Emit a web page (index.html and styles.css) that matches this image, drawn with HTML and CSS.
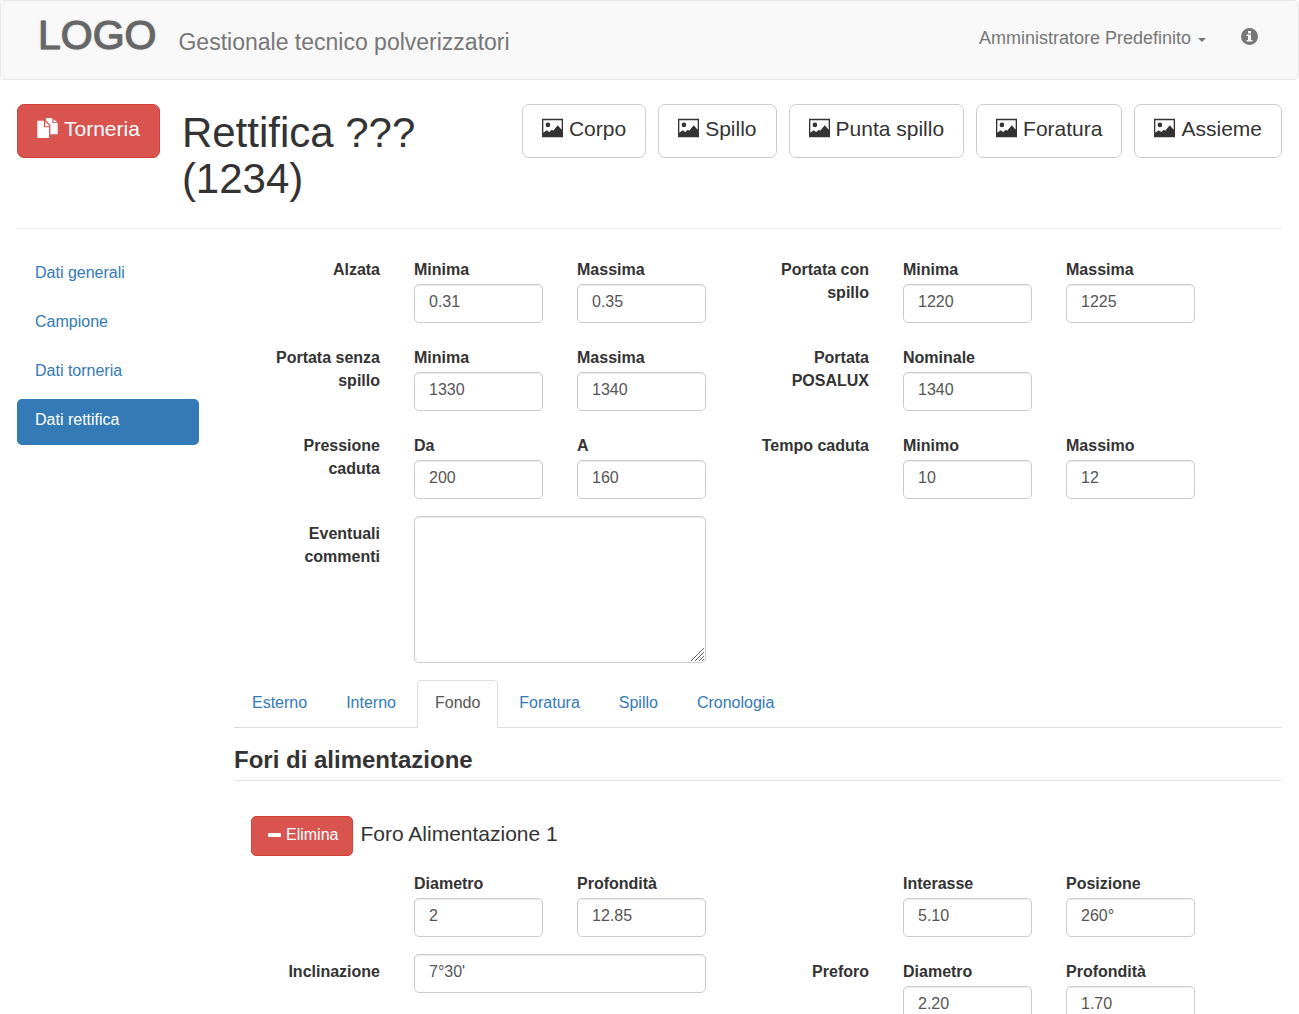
FILE: index.html
```html
<!DOCTYPE html>
<html lang="it">
<head>
<meta charset="utf-8">
<meta name="viewport" content="width=device-width, initial-scale=1">
<title>Gestionale tecnico polverizzatori</title>
<link rel="stylesheet" href="styles.css">
</head>
<body>
<svg class="sprite" aria-hidden="true">
  <symbol id="picture" viewBox="0 0 64 57">
    <path fill-rule="evenodd" d="M0 0H64V57H0zM4 5V43L14 35L22 41L30 34L34 37L48 20L60 34V5z"/>
    <circle cx="18" cy="19" r="7"/>
  </symbol>
  <symbol id="files" viewBox="0 0 64 63">
    <path d="M0 9H21V29H37V63H0zM25 11L37 24V26H25zM27 0H47V16H64V51H41V22L27 7zM51 3L63 13H51z"/>
  </symbol>
  <symbol id="minus" viewBox="0 0 16 16">
    <rect x="2" y="6" width="13" height="4" rx="1"/>
  </symbol>
  <symbol id="info" viewBox="0 0 17 17">
    <path fill-rule="evenodd" d="M8.500 0A8.500 8.500 0 1 1 8.500 17A8.500 8.500 0 1 1 8.500 0zM7 3V5.500H10V3zM5.500 6.500V8H7V12H5.500V13.500H11.500V12H10V6.500z"/>
  </symbol>
</svg>

<nav class="navbar">
  <a class="brand" href="#">
    <span class="logo">LOGO</span>
    <span class="brand-name">Gestionale tecnico polverizzatori</span>
  </a>
  <div class="nav-right">
    <button class="user-menu" type="button" aria-haspopup="true">Amministratore Predefinito <span class="caret"></span></button>
    <a class="info-link" href="#" aria-label="Informazioni"><svg class="icon-info"><use href="#info"/></svg></a>
  </div>
</nav>

<div class="container">
  <header class="page-header">
    <button class="btn btn-lg btn-danger" type="button"><svg class="icon-lg"><use href="#files"/></svg>Torneria</button>
    <h1>Rettifica ??? (1234)</h1>
    <div class="drawings">
      <button class="btn btn-lg" type="button"><svg class="icon-lg"><use href="#picture"/></svg>Corpo</button>
      <button class="btn btn-lg" type="button"><svg class="icon-lg"><use href="#picture"/></svg>Spillo</button>
      <button class="btn btn-lg" type="button"><svg class="icon-lg"><use href="#picture"/></svg>Punta spillo</button>
      <button class="btn btn-lg" type="button"><svg class="icon-lg"><use href="#picture"/></svg>Foratura</button>
      <button class="btn btn-lg" type="button"><svg class="icon-lg"><use href="#picture"/></svg>Assieme</button>
    </div>
  </header>

  <div class="columns">
    <nav class="side-nav">
      <a href="#">Dati generali</a>
      <a href="#">Campione</a>
      <a href="#">Dati torneria</a>
      <a class="active" href="#">Dati rettifica</a>
    </nav>

    <main>
      <form>
        <div class="form-row">
          <span class="row-label">Alzata</span>
          <div class="field"><label for="alzata-min">Minima</label><input id="alzata-min" type="text" value="0.31"></div>
          <div class="field"><label for="alzata-max">Massima</label><input id="alzata-max" type="text" value="0.35"></div>
          <span class="row-label">Portata con spillo</span>
          <div class="field"><label for="con-min">Minima</label><input id="con-min" type="text" value="1220"></div>
          <div class="field"><label for="con-max">Massima</label><input id="con-max" type="text" value="1225"></div>
        </div>
        <div class="form-row">
          <span class="row-label">Portata senza spillo</span>
          <div class="field"><label for="senza-min">Minima</label><input id="senza-min" type="text" value="1330"></div>
          <div class="field"><label for="senza-max">Massima</label><input id="senza-max" type="text" value="1340"></div>
          <span class="row-label">Portata POSALUX</span>
          <div class="field"><label for="posalux">Nominale</label><input id="posalux" type="text" value="1340"></div>
        </div>
        <div class="form-row">
          <span class="row-label">Pressione caduta</span>
          <div class="field"><label for="pressione-da">Da</label><input id="pressione-da" type="text" value="200"></div>
          <div class="field"><label for="pressione-a">A</label><input id="pressione-a" type="text" value="160"></div>
          <span class="row-label">Tempo caduta</span>
          <div class="field"><label for="tempo-min">Minimo</label><input id="tempo-min" type="text" value="10"></div>
          <div class="field"><label for="tempo-max">Massimo</label><input id="tempo-max" type="text" value="12"></div>
        </div>
        <div class="form-row">
          <label class="row-label" for="commenti">Eventuali commenti</label>
          <textarea class="wide" id="commenti"></textarea>
        </div>

        <div class="tabs">
          <a href="#">Esterno</a>
          <a href="#">Interno</a>
          <a class="active" href="#">Fondo</a>
          <a href="#">Foratura</a>
          <a href="#">Spillo</a>
          <a href="#">Cronologia</a>
        </div>

        <h2>Fori di alimentazione</h2>

        <div class="hole-header">
          <button class="btn btn-danger" type="button"><svg class="icon"><use href="#minus"/></svg>Elimina</button>
          <h3>Foro Alimentazione 1</h3>
        </div>
        <div class="form-row">
          <div class="field left-start"><label for="foro-diametro">Diametro</label><input id="foro-diametro" type="text" value="2"></div>
          <div class="field"><label for="foro-profondita">Profondità</label><input id="foro-profondita" type="text" value="12.85"></div>
          <div class="field right-start"><label for="interasse">Interasse</label><input id="interasse" type="text" value="5.10"></div>
          <div class="field"><label for="posizione">Posizione</label><input id="posizione" type="text" value="260°"></div>
        </div>
        <div class="form-row">
          <label class="row-label" for="inclinazione">Inclinazione</label>
          <input class="wide" id="inclinazione" type="text" value="7°30'">
          <span class="row-label">Preforo</span>
          <div class="field"><label for="preforo-diametro">Diametro</label><input id="preforo-diametro" type="text" value="2.20"></div>
          <div class="field"><label for="preforo-profondita">Profondità</label><input id="preforo-profondita" type="text" value="1.70"></div>
        </div>
      </form>
    </main>
  </div>
</div>
</body>
</html>
```

FILE: styles.css
```css
* {
  box-sizing: border-box;
}

body {
  margin: 0;
  background: #fff;
  color: #333;
  font: 16px/23px "Liberation Sans", Arial, sans-serif;
}

button,
input,
textarea {
  font: inherit;
}

a {
  color: #337ab7;
  text-decoration: none;
}

svg {
  fill: currentColor;
  flex: none;
}

.sprite {
  display: none;
}

/* Top bar */
.navbar {
  display: flex;
  justify-content: space-between;
  height: 80px;
  padding: 0 40px 0 37px;
  background: #f8f8f8;
  border: 1px solid #e7e7e7;
  border-radius: 5px;
}

.brand {
  display: flex;
  align-items: flex-start;
  gap: 22px;
  color: #777;
}

.logo {
  padding-top: 11px;
  color: #666;
  font-size: 41px;
  line-height: 46px;
  -webkit-text-stroke: 1px #666;
  text-shadow: 0 0 2px #888;
}

.brand-name {
  padding-top: 26px;
  font-size: 23px;
  line-height: 30px;
}

.nav-right {
  display: flex;
  align-items: flex-start;
  gap: 35px;
  padding-top: 25px;
}

.user-menu {
  display: flex;
  align-items: center;
  gap: 7px;
  padding: 0;
  border: 0;
  background: none;
  color: #777;
  font-size: 18px;
  line-height: 24px;
}

.caret {
  margin-top: 4px;
  border: 4px solid transparent;
  border-top-color: currentColor;
  border-bottom: 0;
}

.info-link {
  padding-top: 2px;
  color: #777;
}

.icon-info {
  display: block;
  width: 17px;
  height: 17px;
}

/* Buttons */
.btn {
  display: flex;
  align-items: center;
  flex: none;
  gap: 4px;
  height: 40px;
  padding: 0 14px 3px;
  border: 1px solid #ccc;
  border-radius: 5px;
  background: #fff;
  color: #333;
  white-space: nowrap;
}

.btn-lg {
  gap: 6px;
  height: 54px;
  padding: 0 19px 6px;
  border-radius: 7px;
  font-size: 21px;
}

.btn-danger {
  border-color: #d43f3a;
  background: #d9534f;
  color: #fff;
}

.icon {
  width: 16px;
  height: 16px;
}

.icon-lg {
  width: 21px;
  height: 20px;
}

/* Page heading */
.container {
  padding: 24px 17px;
}

.page-header {
  display: flex;
  align-items: flex-start;
  margin-bottom: 23px;
  padding-bottom: 26px;
  border-bottom: 1px solid #eee;
}

h1 {
  flex: 1;
  margin: 6px 12px 0 22px;
  font-size: 42px;
  font-weight: 400;
  line-height: 46px;
}

.drawings {
  display: flex;
  gap: 12px;
}

/* Side menu and content */
.columns {
  display: grid;
  grid-template-columns: 182fr 1048fr;
  gap: 35px;
  align-items: start;
}

.side-nav {
  display: grid;
  gap: 3px;
}

.side-nav a {
  padding: 9px 18px 14px;
  border-radius: 5px;
}

.side-nav .active {
  background: #337ab7;
  color: #fff;
}

/* Form rows */
.form-row {
  display: grid;
  grid-template-columns: 146fr repeat(5, 129fr) 53fr;
  gap: 34px;
  align-items: start;
  margin-bottom: 17px;
}

.form-row label,
.row-label {
  font-weight: 700;
}

.row-label {
  padding: 6px 0 0 17px;
  text-align: right;
}

.field {
  display: grid;
  gap: 3px;
  padding-top: 6px;
}

.wide {
  grid-column: span 2;
}

.left-start {
  grid-column: 2;
}

.right-start {
  grid-column: 5;
}

input,
textarea {
  width: 100%;
  min-width: 0;
  height: 39px;
  padding: 0 14px 3px;
  border: 1px solid #ccc;
  border-radius: 5px;
  background: #fff;
  box-shadow: inset 0 1px 1px rgba(0, 0, 0, 0.075);
  color: #555;
}

textarea {
  display: block;
  height: 147px;
  padding: 7px 14px;
  resize: vertical;
}

textarea::-webkit-resizer {
  background: url("data:image/svg+xml,%3Csvg xmlns='http://www.w3.org/2000/svg' width='15' height='15'%3E%3Cpath d='M1 14L14 1M5 14L14 5M9 14L14 9M12 14L14 12' stroke='%23666' fill='none'/%3E%3C/svg%3E") no-repeat;
}

/* Tabs */
.tabs {
  display: flex;
  gap: 3px;
  border-bottom: 1px solid #ddd;
}

.tabs a {
  margin-bottom: -1px;
  padding: 10px 17px 13px;
  border: 1px solid transparent;
  border-radius: 5px 5px 0 0;
}

.tabs .active {
  border-color: #ddd #ddd #fff;
  background: #fff;
  color: #555;
}

h2 {
  margin: 16px 0 35px;
  padding-bottom: 4px;
  border-bottom: 1px solid #e5e5e5;
  font-size: 24px;
  line-height: 32px;
}

.hole-header {
  display: flex;
  align-items: center;
  gap: 7px;
  margin-bottom: 10px;
  padding-left: 17px;
}

h3 {
  margin: 0;
  padding-bottom: 6px;
  font-size: 21px;
  font-weight: 400;
}
```
